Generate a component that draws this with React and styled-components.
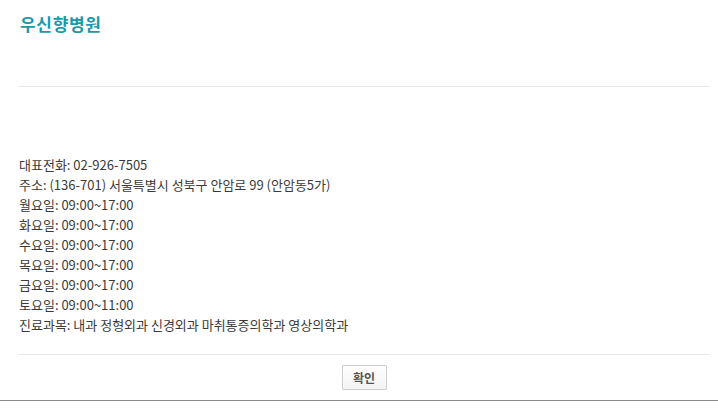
import React from 'react';
import styled, { createGlobalStyle } from 'styled-components';

const GlobalStyle = createGlobalStyle`
  html, body {
    margin: 0;
    padding: 0;
    background: #ffffff;
  }
  body {
    font-family: "Noto Sans CJK KR", "Noto Sans", sans-serif;
  }
`;

const Popup = styled.div`
  width: 718px;
  display: flex;
  flex-direction: column;
  border-bottom: 1px solid #8a8a8a;
`;

const Inner = styled.div`
  padding: 0 9px 0 19px;
  display: flex;
  flex-direction: column;
`;

const Header = styled.div`
  height: 87px;
  padding-top: 13px;
  box-sizing: border-box;
  border-bottom: 1px solid #e6e6e6;
`;

const Title = styled.h1`
  margin: 0 0 0 1px;
  font-size: 17px;
  line-height: 22px;
  font-weight: 700;
  color: #1b98aa;
  letter-spacing: 0.7px;
`;

const InfoList = styled.ul`
  list-style: none;
  margin: 0;
  padding: 68px 0 19px;
  border-bottom: 1px solid #e6e6e6;
`;

const InfoRow = styled.li`
  font-size: 13px;
  line-height: 20px;
  color: #3a3a3a;
  white-space: nowrap;
`;

const Footer = styled.div`
  display: flex;
  justify-content: center;
  padding: 10px 0 10px;
`;

const ConfirmButton = styled.button`
  width: 45px;
  height: 25px;
  padding: 0;
  border: 1px solid #cfcfcf;
  border-radius: 1px;
  background: linear-gradient(#ffffff, #f3f3f3);
  font-family: inherit;
  font-size: 12px;
  font-weight: 700;
  color: #555555;
  cursor: pointer;
`;

const rows = [
  '대표전화: 02-926-7505',
  '주소: (136-701) 서울특별시 성북구 안암로 99 (안암동5가)',
  '월요일: 09:00~17:00',
  '화요일: 09:00~17:00',
  '수요일: 09:00~17:00',
  '목요일: 09:00~17:00',
  '금요일: 09:00~17:00',
  '토요일: 09:00~11:00',
  '진료과목: 내과 정형외과 신경외과 마취통증의학과 영상의학과',
];

const App = () => (
  <>
    <GlobalStyle />
    <Popup>
      <Inner>
        <Header>
          <Title>우신향병원</Title>
        </Header>
        <InfoList>
          {rows.map(row => (
            <InfoRow key={row}>{row}</InfoRow>
          ))}
        </InfoList>
        <Footer>
          <ConfirmButton type="button">확인</ConfirmButton>
        </Footer>
      </Inner>
    </Popup>
  </>
);

export default App;
